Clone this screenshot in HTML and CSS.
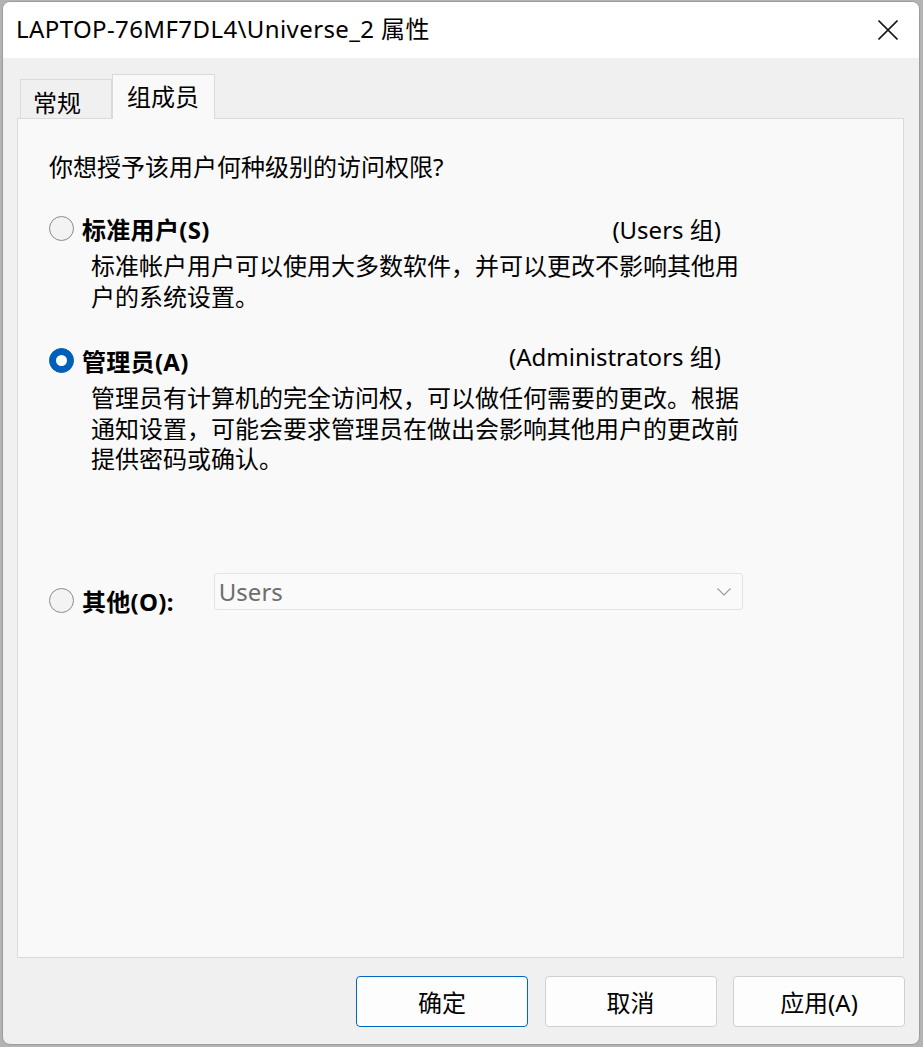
FILE: index.html
```html
<!DOCTYPE html>
<html lang="zh-CN">
<head>
    <meta charset="UTF-8">
    <title>LAPTOP-76MF7DL4\Universe_2 属性</title>
    <link rel="stylesheet" href="styles.css">
</head>
<body>
    <div class="window">
        <div class="titlebar">
            <span class="title">LAPTOP-76MF7DL4\Universe_2 属性</span>
            <button class="close" aria-label="关闭">
                <svg width="20" height="20" viewBox="0 0 20 20">
                    <path d="M0.5 0.5 L19.5 19.5 M19.5 0.5 L0.5 19.5" stroke="#1a1a1a" stroke-width="1.6" fill="none"/>
                </svg>
            </button>
        </div>

        <div class="content">
            <div class="tabs">
                <div class="tab">常规</div>
                <div class="tab active">组成员</div>
            </div>

            <div class="panel">
                <p class="question">你想授予该用户何种级别的访问权限?</p>

                <div class="option">
                    <div class="option-head">
                        <span class="radio"></span>
                        <span class="label">标准用户(S)</span>
                        <span class="group">(Users 组)</span>
                    </div>
                    <p class="desc">标准帐户用户可以使用大多数软件，并可以更改不影响其他用<br>户的系统设置。</p>
                </div>

                <div class="option">
                    <div class="option-head">
                        <span class="radio checked"></span>
                        <span class="label">管理员(A)</span>
                        <span class="group raised">(Administrators 组)</span>
                    </div>
                    <p class="desc">管理员有计算机的完全访问权，可以做任何需要的更改。根据<br>通知设置，可能会要求管理员在做出会影响其他用户的更改前<br>提供密码或确认。</p>
                </div>

                <div class="option other">
                    <div class="option-head">
                        <span class="radio"></span>
                        <span class="label">其他(O):</span>
                        <div class="select">
                            <span>Users</span>
                            <svg width="14" height="8" viewBox="0 0 14 8">
                                <path d="M0.5 0.5 L7 7 L13.5 0.5" stroke="#9a9a9a" stroke-width="1.1" fill="none"/>
                            </svg>
                        </div>
                    </div>
                </div>
            </div>

            <div class="buttons">
                <button class="btn default">确定</button>
                <button class="btn">取消</button>
                <button class="btn">应用(A)</button>
            </div>
        </div>
    </div>
</body>
</html>
```

FILE: styles.css
```css
html, body {
    margin: 0;
    height: 100%;
}
body {
    background: #b3b3b3;
    font-family: "Noto Sans", "Noto Sans CJK SC", sans-serif;
    color: #000;
    padding: 1px 3px 2px 2px;
    box-sizing: border-box;
}
.window {
    height: 100%;
    display: flex;
    flex-direction: column;
    background: #f0f0f0;
    border: 1px solid #9c9c9c;
    border-radius: 8px;
    overflow: hidden;
    box-sizing: border-box;
}
.titlebar {
    height: 56px;
    flex-shrink: 0;
    background: #fff;
    display: flex;
    align-items: center;
    justify-content: space-between;
    padding: 0 21px 0 13px;
}
.title {
    font-size: 24px;
    letter-spacing: 0.4px;
    line-height: 30px;
    margin-top: -2px;
}
.close {
    border: none;
    background: none;
    padding: 0;
    width: 20px;
    height: 20px;
    display: flex;
}
.content {
    flex: 1;
    display: flex;
    flex-direction: column;
    padding: 16px 15px 17px 14px;
}
.tabs {
    display: flex;
    align-items: flex-end;
    padding-left: 3px;
    margin-bottom: -1px;
}
.tab {
    height: 40px;
    width: 92px;
    box-sizing: border-box;
    border: 1px solid #dadada;
    border-bottom: none;
    background: #f0f0f0;
    font-size: 24px;
    line-height: 44px;
    padding-left: 12px;
    font-family: "Noto Sans CJK SC", sans-serif;
}
.tab.active {
    height: 45px;
    width: 103px;
    background: #f9f9f9;
    padding-left: 14px;
    line-height: 42px;
    position: relative;
    z-index: 1;
}
.panel {
    flex: 1;
    background: #f9f9f9;
    border: 1px solid #dadada;
    padding: 33px 0 0 31px;
}
.question {
    margin: 0;
    font-size: 24px;
    line-height: 30px;
}
.option {
    margin-top: 30px;
}
.option + .option {
    margin-top: 32px;
}
.option.other {
    margin-top: 110px;
}
.option-head {
    display: flex;
    align-items: center;
    height: 32px;
    width: 672px;
    white-space: nowrap;
}
.radio {
    width: 25px;
    height: 25px;
    box-sizing: border-box;
    border-radius: 50%;
    border: 1.5px solid #8a8a8a;
    background: #f3f3f3;
    margin-right: 8px;
    flex-shrink: 0;
    display: flex;
    align-items: center;
    justify-content: center;
}
.radio.checked {
    background: #005fb8;
    border-color: #005fb8;
}
.radio.checked::after {
    content: "";
    width: 11px;
    height: 11px;
    border-radius: 50%;
    background: #fff;
}
.label {
    font-size: 24px;
    font-weight: bold;
    letter-spacing: 0.3px;
}
.group {
    margin-left: auto;
    font-size: 24px;
}
.group.raised {
    margin-bottom: 10px;
}
.desc {
    margin: 7px 0 0 42px;
    width: 680px;
    white-space: nowrap;
    font-size: 24px;
    line-height: 30.5px;
}
.select {
    margin-left: 40px;
    margin-bottom: 18px;
    width: 529px;
    height: 37px;
    flex-shrink: 0;
    box-sizing: border-box;
    background: #fafafa;
    border: 1px solid #e3e3e3;
    border-radius: 3px;
    display: flex;
    align-items: center;
    justify-content: space-between;
    padding: 0 11px 0 4px;
    font-size: 24px;
    color: #6e6e6e;
}
.buttons {
    display: flex;
    justify-content: flex-end;
    gap: 16.5px;
    margin: 18px -1px 0 0;
}
.btn {
    width: 172px;
    height: 51px;
    background: #fdfdfd;
    border: 1px solid #d0d0d0;
    border-radius: 4px;
    font-family: "Noto Sans", "Noto Sans CJK SC", sans-serif;
    font-size: 24px;
    color: #000;
    padding: 0;
}
.btn.default {
    border-color: #0067c0;
}
```
